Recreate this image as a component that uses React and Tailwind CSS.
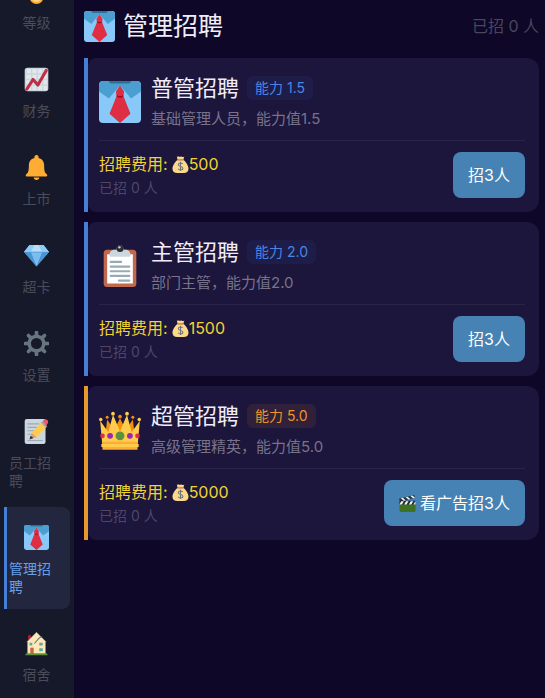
import { useState } from "react";
import clsx from "clsx";

/* ── Icons ─────────────────────────────────────────────────────────────── */

const Icon = ({ className, children }) => (
  <svg viewBox="0 0 36 36" className={clsx("shrink-0", className)} aria-hidden="true">
    {children}
  </svg>
);

const MedalIcon = ({ className }) => (
  <Icon className={className}>
    <path fill="#55acee" d="M18 8 11 0H4l9 17h10L32 0h-7z" />
    <circle cx="18" cy="26" r="10" fill="#ffac33" />
    <circle cx="18" cy="25" r="8" fill="#ffd983" />
  </Icon>
);

const ChartIcon = ({ className }) => (
  <Icon className={className}>
    <rect x="1" y="1" width="34" height="34" rx="4" fill="#ccd6dd" />
    <path
      fill="#e1e8ed"
      d="M4 3h6v6H4zM12 3h6v6h-6zM20 3h6v6h-6zM28 3h5v6h-5zM3 11h7v6H3zM12 11h6v6h-6zM20 11h6v6h-6zM28 11h5v6h-5zM3 19h7v6H3zM12 19h6v6h-6zM20 19h6v6h-6zM28 19h5v6h-5zM4 27h6v6H4zM12 27h6v6h-6zM20 27h6v6h-6zM28 27h5v6h-5z"
    />
    <path d="m4 32 9-14 7 8L32 5" fill="none" stroke="#be2f45" strokeWidth="4.500" strokeLinecap="round" strokeLinejoin="round" />
  </Icon>
);

const BellIcon = ({ className }) => (
  <Icon className={className}>
    <path
      fill="#ffac33"
      d="M18 0c1.700 0 3 1.300 3 3v1.200C26.500 5.500 29 10 29 15c0 8 1 10 3 12 1 1 1.500 1.500 1.500 2.500S32.500 31 31.500 31h-27C3.500 31 2.500 30.500 2.500 29.500S3 28 4 27c2-2 3-4 3-12C7 10 9.500 5.500 15 4.200V3c0-1.700 1.300-3 3-3z"
    />
    <path fill="#ffac33" d="M14 32.500h8c0 2-1.500 3.500-4 3.500s-4-1.500-4-3.500z" />
  </Icon>
);

const GemIcon = ({ className }) => (
  <Icon className={className}>
    <path fill="#bdddf4" d="M8 3h20l8 10H0z" />
    <path fill="#8ccaf7" d="M8 3h7l-5 10H0zM28 3h-7l5 10h10z" />
    <path fill="#5dadec" d="M0 13h36L18 34z" />
    <path fill="#4289c1" d="M0 13h10l8 21zM36 13H26l-8 21z" opacity=".65" />
    <path fill="#8ccaf7" d="M10 13h16l-8 20z" opacity=".6" />
    <path d="M10 13h16" stroke="#3b88c3" strokeWidth=".8" />
  </Icon>
);

const GearIcon = ({ className }) => (
  <Icon className={className}>
    <g fill="#66757f">
      <path d="M15.500 1.500a2.500 2.500 0 0 1 5 0L21 8h-6zM15.500 34.500a2.500 2.500 0 0 0 5 0L21 28h-6zM1.500 15.500a2.500 2.500 0 0 0 0 5L8 21v-6zM34.500 15.500a2.500 2.500 0 0 1 0 5L28 21v-6z" />
      <g transform="rotate(45 18 18)">
        <path d="M15.500 1.500a2.500 2.500 0 0 1 5 0L21 8h-6zM15.500 34.500a2.500 2.500 0 0 0 5 0L21 28h-6zM1.500 15.500a2.500 2.500 0 0 0 0 5L8 21v-6zM34.500 15.500a2.500 2.500 0 0 1 0 5L28 21v-6z" />
      </g>
    </g>
    <circle cx="18" cy="18" r="10.500" fill="none" stroke="#66757f" strokeWidth="5" />
  </Icon>
);

const MemoIcon = ({ className }) => (
  <Icon className={className}>
    <rect x="1" y="0" width="30" height="36" rx="3" fill="#ccd6dd" />
    <path d="M5 7h17M5 12h14M5 17h10M5 22h6M5 31h22" stroke="#99aab5" strokeWidth="1.600" />
    <path fill="#ffcc4d" d="m11 20 14-15 7 7-14 14z" />
    <path fill="#d99e82" d="m11 20 7 6-9 3z" />
    <path fill="#292f33" d="m9.500 24-1.500 5.500 5.500-2z" />
    <path fill="#99aab5" d="m24.500 5.500 2-2 7 7-2 2z" />
    <path fill="#ea596e" d="m26.500 3.500 2.500-2.500c1-1.200 3-1 4.500.5s1.800 3.500.8 4.500l-1.800 3.500z" />
  </Icon>
);

const TieIcon = ({ className }) => (
  <Icon className={className}>
    <rect width="36" height="36" rx="3.500" fill="#88c9f9" />
    <path fill="#2f7096" d="M7 0h22l-2 3H9z" />
    <path fill="#4a9fd0" d="M3.500 0H8l2 2.200h16L28 0h4.500C34.500 0 36 1.500 36 3.500V9l-8.500 6L19 5h-2l-8.500 10L0 9V3.500C0 1.500 1.500 0 3.500 0z" />
    <path fill="#dd2e44" d="m18 4 3.500 5-.5 4 6 15-9 8-9-8 6-15-.5-4z" />
    <path d="M15.500 12.500c1 1.500 4 1.500 5 0" fill="none" stroke="#a0041e" strokeWidth="1.300" />
  </Icon>
);

const HouseIcon = ({ className }) => (
  <Icon className={className}>
    <rect x="6" y="6" width="4" height="9" fill="#be1931" />
    <path fill="#ffe8b6" d="M5 15 18 2l13 13v18H5z" />
    <path d="M4 16 18 2l14 14" fill="none" stroke="#c1b799" strokeWidth="1.300" />
    <path d="m15 18 6-7 4-3" fill="none" stroke="#66757f" strokeWidth="1.600" />
    <path fill="#c1694f" d="M9 24h5v9H9z" />
    <path fill="#55acaa" d="M8 17h4v4H8zM22 17h5v4h-5zM22 25h5v4h-5z" />
    <path fill="#5c913b" d="M4 32h28c1 0 2 1 2 3H2c0-2 1-3 2-3z" />
  </Icon>
);

const ClipboardIcon = ({ className }) => (
  <Icon className={className}>
    <rect x="4" y="4" width="28" height="32" rx="3" fill="#c1694f" />
    <path fill="#fff" d="M7 8h22v25H7z" />
    <path fill="#ccd6dd" d="M13 4h2a3 4 0 0 1 6 0h2c2 0 4 2 4 4v1c0 1-1 1-1 1H10s-1 0-1-1V8c0-2 2-4 4-4z" />
    <circle cx="18" cy="3" r="3" fill="#292f33" />
    <circle cx="17.500" cy="2" r="1" fill="#ccd6dd" />
    <path d="M10 14.500h9M10 18.500h16M10 22.500h16M10 26.500h16M17 30.500h9" stroke="#99aab5" strokeWidth="1.800" strokeLinecap="round" />
  </Icon>
);

const CrownIcon = ({ className }) => (
  <Icon className={className}>
    <path fill="#f4900c" d="m5 26 2-17 6 9 5-10 5 10 6-9 2 17z" />
    <path fill="#ffcc4d" d="M3 33 1 10l7 10 4-15 6 14 6-14 4 15 7-10-2 23z" />
    <g fill="#ffcc4d">
      <circle cx="1.500" cy="9" r="1.500" />
      <circle cx="12" cy="4" r="1.600" />
      <circle cx="24" cy="4" r="1.600" />
      <circle cx="34.500" cy="9" r="1.500" />
    </g>
    <g fill="#f4900c">
      <circle cx="7" cy="7" r="1.300" />
      <circle cx="18" cy="6.500" r="1.600" />
      <circle cx="29" cy="7" r="1.300" />
    </g>
    <path fill="#ffac33" d="M3 28h30v2H3zM3 32h30v3H3z" />
    <path fill="#ffcc4d" d="M2 30h32v2.500H2z" />
    <circle cx="18" cy="23" r="3.800" fill="#5c913b" />
    <circle cx="9.500" cy="23" r="2.500" fill="#9b26b6" />
    <circle cx="26.500" cy="23" r="2.500" fill="#9b26b6" />
    <circle cx="3" cy="23" r="2" fill="#dd2e44" />
    <circle cx="33" cy="23" r="2" fill="#dd2e44" />
  </Icon>
);

const MoneyBagIcon = ({ className }) => (
  <Icon className={className}>
    <path fill="#fdd888" d="M12 8 10 1c2 1.500 3-.5 5 .5s4-1 6 0 3 1 5-.5l-2 7c5 4 11 12 11 19 0 6-4 9-10 9H11C5 36 1 33 1 27 1 20 7 12 12 8z" />
    <path fill="#bf6952" d="M11.500 7h13v2.500h-13z" />
    <path d="M22.500 17c-1-1.500-2.500-2-4.500-2-2.500 0-4.500 1.300-4.500 3.500 0 5 9.500 2.500 9.500 7.500 0 2.200-2.200 3.500-5 3.500-2.500 0-4-1-5-2.500M18 12v20" fill="none" stroke="#67757f" strokeWidth="2.200" />
  </Icon>
);

const ClapperIcon = ({ className }) => (
  <Icon className={className}>
    <path fill="#3f7123" d="M1 18h34v15c0 2-1 3-3 3H4c-2 0-3-1-3-3z" />
    <path fill="#292f33" d="M1 12h34v8H1zM0 8 32 0l2 6L2 14z" />
    <path fill="#f5f8fa" d="m5 13-4 7h5l4-7zM15 13l-4 7h5l4-7zM25 13l-4 7h5l4-7zM33 16l-2 4h4v-7zM4 7l6 5 4-1-6-5zM14 4.500l6 5 4-1-6-5zM24 2l6 5 4-1-6-5z" />
  </Icon>
);

/* ── Data ──────────────────────────────────────────────────────────────── */

const navItems = [
  { label: "等级",     icon: MedalIcon },
  { label: "财务",     icon: ChartIcon },
  { label: "上市",     icon: BellIcon },
  { label: "超卡",     icon: GemIcon },
  { label: "设置",     icon: GearIcon },
  { label: "员工招聘", icon: MemoIcon },
  { label: "管理招聘", icon: TieIcon },
  { label: "宿舍",     icon: HouseIcon },
];

const roles = [
  { title: "普管招聘", ability: "1.5", desc: "基础管理人员，能力值1.5", cost: 500,  icon: TieIcon },
  { title: "主管招聘", ability: "2.0", desc: "部门主管，能力值2.0",     cost: 1500, icon: ClipboardIcon },
  { title: "超管招聘", ability: "5.0", desc: "高级管理精英，能力值5.0", cost: 5000, icon: CrownIcon, premium: true },
];

/* ── Sidebar ───────────────────────────────────────────────────────────── */

const Sidebar = ({ active, onSelect }) => (
  <aside className="w-[74px] shrink-0 overflow-hidden bg-[#161929] px-1">
    {/* list is scrolled down a little, the first entry is cut off */}
    <nav className="-mt-[39px] flex flex-col gap-1">
      {navItems.map(({ label, icon: NavIcon }) => (
        <button
          key={label}
          type="button"
          onClick={() => onSelect(label)}
          className={clsx(
            "flex flex-col items-center rounded-r-lg border-l-3 py-[13px] pr-1",
            active === label
              ? "border-[#467fd6] bg-[#22273f] text-[#6a9fe6]"
              : "border-transparent text-[#4a4c5b]"
          )}
        >
          <span className="mb-1.5 flex h-[34px] items-center">
            <NavIcon className="size-[25px]" />
          </span>
          <span className="max-w-[55px] text-left text-[14px] leading-[18px]">{label}</span>
        </button>
      ))}
    </nav>
  </aside>
);

/* ── Recruit card ──────────────────────────────────────────────────────── */

const RecruitCard = ({ role, hired, onHire }) => {
  const RoleIcon = role.icon;

  return (
    <article className={clsx("border-l-4", role.premium ? "border-[#e6982d]" : "border-[#467fd6]")}>
      <div className="rounded-l-lg rounded-r-xl bg-[#1c153c] pt-3.5 pr-3.5 pb-3 pl-[11px]">
        <div className="flex items-center gap-2.5 border-b border-[#2a2447] pb-[9px]">
          <RoleIcon className="size-[42px]" />
          <div className="min-w-0">
            <div className="flex items-center gap-2">
              <h2 className="text-[22px] leading-8 text-[#f0edf8]">{role.title}</h2>
              <span
                className={clsx(
                  "rounded-md px-2 text-[14px] leading-6",
                  role.premium ? "bg-[#30203a] text-[#ed932b]" : "bg-[#1e1d4a] text-[#4985e4]"
                )}
              >
                能力 {role.ability}
              </span>
            </div>
            <p className="mt-[3px] text-[15px] leading-6 text-[#787389]">{role.desc}</p>
          </div>
        </div>

        <div className="flex items-start justify-between pt-[11px]">
          <div>
            <p className="flex items-center text-[16px] leading-6 text-[#f0d332]">
              招聘费用:
              <MoneyBagIcon className="ml-1 size-[17px]" />
              {role.cost}
            </p>
            <p className="text-[14px] leading-6 text-[#4d4766]">已招 {hired} 人</p>
          </div>
          <button
            type="button"
            onClick={onHire}
            className="flex h-[46px] items-center gap-1 rounded-lg bg-[#4682b4] px-[15px] text-[16px] text-white"
          >
            {role.premium && <ClapperIcon className="size-[17px]" />}
            {role.premium ? "看广告招3人" : "招3人"}
          </button>
        </div>
      </div>
    </article>
  );
};

const App = () => {
  const [active, setActive] = useState("管理招聘");
  const [hired, setHired]   = useState({});

  const total = Object.values(hired).reduce((sum, n) => sum + n, 0);

  const hire = (title) => {
    setHired((prev) => ({ ...prev, [title]: (prev[title] || 0) + 3 }));
  };

  return (
    <div className="flex h-screen overflow-hidden bg-[#0e0727] font-[Inter,'Noto_Sans_CJK_SC',sans-serif]">
      <Sidebar active={active} onSelect={setActive} />

      <main className="min-w-0 flex-1 overflow-hidden pt-2 pr-1.5 pl-2.5">
        <header className="mb-3.5 flex h-9 items-center gap-2">
          <TieIcon className="size-[31px]" />
          <h1 className="text-[25px] leading-9 text-[#f0edf8]">管理招聘</h1>
          <span className="ml-auto text-[16px] text-[#4b465c]">已招 {total} 人</span>
        </header>

        <div className="flex flex-col gap-2.5">
          {roles.map((role) => (
            <RecruitCard
              key={role.title}
              role={role}
              hired={hired[role.title] || 0}
              onHire={() => hire(role.title)}
            />
          ))}
        </div>
      </main>
    </div>
  );
};

export default App;
